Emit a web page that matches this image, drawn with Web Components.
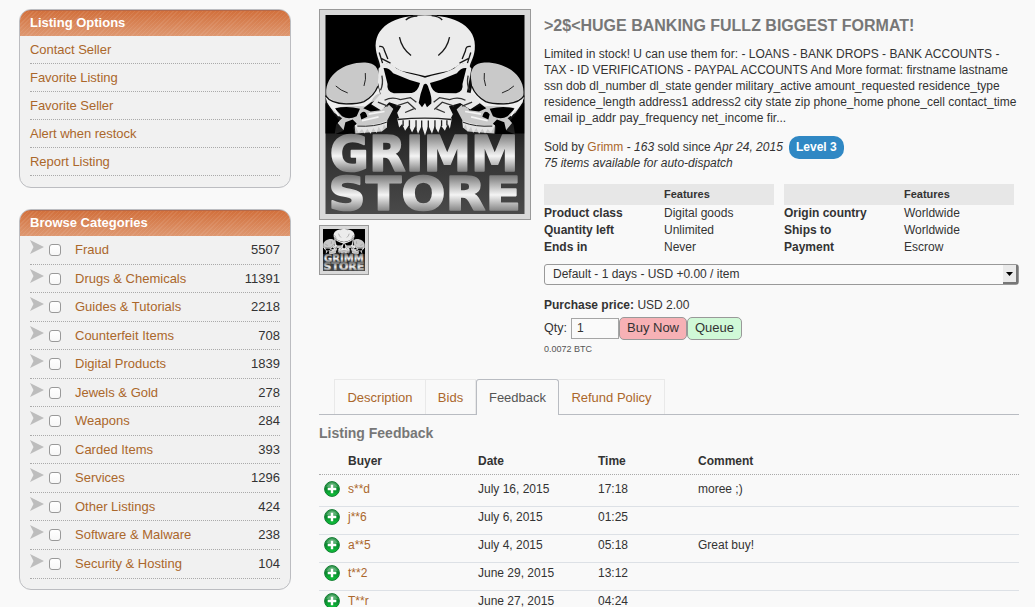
<!DOCTYPE html>
<html lang="en">
<head>
<meta charset="utf-8">
<title>Listing</title>
<style>
html,body{margin:0;background:#f9f9f9;overflow:hidden}
body{font:12px/16px "Liberation Sans",Arial,sans-serif;color:#333;height:607px}
</style>
</head>
<body>
<listing-page></listing-page>
<script>
const define = (name, render) => customElements.define(name, class extends HTMLElement {
  connectedCallback() {
    if (this.shadowRoot) return;
    this.attachShadow({mode: 'open'}).innerHTML = '<style>*{box-sizing:border-box}</style>' + render(this);
  }
});

define('side-panel', el => `
<style>
:host{display:block;box-sizing:border-box;width:272px;height:var(--h);border:1px solid #bcbdc1;border-radius:12px;background:#f1f1f1;overflow:hidden}
header{height:26px;padding:0 10px;font:bold 13px/24px "Liberation Sans",Arial,sans-serif;color:#fff;border-top:1px solid #b5694a;
background:repeating-linear-gradient(135deg,#ffffff14 0 1px,transparent 1px 3px),linear-gradient(#d2703c,#de9871)}
main{padding:0 10px}
</style>
<header>${el.getAttribute('heading')}</header><main><slot></slot></main>`);

define('option-row', () => `
<style>
:host{display:block;box-sizing:border-box;height:28.1px;border-bottom:1px dotted #aaa;font-size:13px;line-height:27px;letter-spacing:-.03px;color:#ab672b}
</style><slot></slot>`);

define('category-row', el => `
<style>
:host{display:flex;box-sizing:border-box;height:28.55px;border-bottom:1px dotted #aaa;font-size:13px;line-height:27px;color:#ab672b}
svg{width:14px;height:14px;margin-top:4px;flex:none}
i{width:12px;height:12px;margin:8px 14px 0 5px;border:1px solid #999;border-radius:3px;background:linear-gradient(#fff,#f7f7f7);flex:none}
b{font-weight:400;color:#333;margin-left:auto}
</style>
<svg viewBox="0 0 14 14"><path d="M0 0 14 7 0 14 3.5 7Z" fill="#bdbdbd"/></svg><i></i><span><slot></slot></span><b>${el.getAttribute('count')}</b>`);

define('store-art', () => `
<style>:host{display:block}svg{display:block;width:100%;height:100%;overflow:visible}text{font-family:"DejaVu Sans","Liberation Sans",sans-serif;font-weight:bold}</style>
<svg viewBox="30 27 600 600">
<defs>
<linearGradient id="bg" x1="0" y1="0" x2="0" y2="1"><stop offset=".4" stop-color="#000"/><stop offset=".68" stop-color="#303030"/><stop offset="1" stop-color="#4a4a4a"/></linearGradient>
<linearGradient id="g1" gradientUnits="userSpaceOnUse" x1="0" y1="384" x2="0" y2="498"><stop stop-color="#777"/><stop offset=".6" stop-color="#f4f4f4"/><stop offset="1" stop-color="#858585"/></linearGradient>
<linearGradient id="g2" gradientUnits="userSpaceOnUse" x1="0" y1="510" x2="0" y2="618"><stop stop-color="#777"/><stop offset=".55" stop-color="#f4f4f4"/><stop offset="1" stop-color="#858585"/></linearGradient>
<g id="side">
<path fill="#c9c9c9" d="M32 262C30 205 90 168 150 170C180 172 190 186 192 215L196 262L210 290L240 300L216 345L215 366L200 378L120 384L118 362L84 374L66 352L80 338L56 322L34 290Z"/>
<path d="M30 275Q48 276 58 291Q92 306 138 291Q168 275 190 238L198 262Q176 266 168 288L150 302Q110 300 62 306L56 318Q38 300 30 275Z" fill="#efefef"/>
<path d="M30 270Q46 294 92 295Q130 295 146 288Q176 272 188 242" fill="none" stroke="#111" stroke-width="4"/>
<path d="M58 309Q94 300 134 310L124 332Q100 345 80 332ZM144 308L168 290 192 282 203 296 196 314 166 318ZM134 326Q150 308 156 334L138 342ZM30 292L54 324 72 346 62 358 58 384H30ZM90 350L112 342 124 354 114 366 118 386H60L84 376Z"/>
<path d="M118 359Q170 364 216 345L214 368 206 357 200 378 190 364 184 383 174 368 166 385 156 370 148 384 140 371 130 382Z" fill="#e4e4e4"/>
<path d="M126 362Q178 365 215 350M150 202Q153 220 146 241M61 241Q76 255 97 262" fill="none" stroke="#222" stroke-width="3"/>
<path d="M140 346L190 334M160 326L208 318M52 302L70 332" stroke="#f4f4f4" stroke-width="5"/>
</g>
</defs>
<path d="M30 27H630V627H30Z" fill="url(#bg)"/>
<use href="#side"/><use href="#side" transform="matrix(-1 0 0 1 659 0)"/>
<path d="M192 200L186 165C172 88 220 28 330 28C440 28 490 88 474 165L466 200L472 240L466 270L500 300L468 312L440 298L414 322L410 354L250 354L247 322L222 298L190 314L166 300L196 270L188 240Z" fill="#0b0b0b"/>
<path fill="#ececec" d="M182 132C174 62 238 28 330 28C422 28 488 62 480 132C476 162 466 168 464 188C444 158 430 184 400 196Q360 203 330 211Q298 203 260 196C230 184 216 158 196 188C194 166 186 158 182 132Z"/>
<path fill="#e9e9e9" d="M190 188Q216 158 244 188Q270 202 311 210L330 216L350 210Q390 202 418 188Q446 158 470 188L462 232L456 260Q480 260 496 292L466 312L436 292L402 302L414 326L405 344Q330 330 254 344L246 322L258 302L222 290L198 315L168 296L196 265L188 230Z"/>
<path d="M205 187Q221 185 234 203L284 223 315 232Q308 260 290 262L236 263Q213 258 217 235ZM455 187Q439 185 426 203L376 223 345 232Q352 260 370 262L424 263Q447 258 443 235Z"/>
<path d="M326 237Q336 228 341 248Q352 277 349 294L336 305 330 292 321 305 311 292Q315 265 326 237Z"/>
<path d="M246 339Q330 327 411 339L405 370 399 356 390 376 378 360 370 382 359 362 351 385 340 360 330 390 320 360 309 385 301 362 291 381 281 360 270 376 261 356 252 366Z" fill="#efefef"/>
<path d="M247 342Q330 334 410 342M264 344V362M283 344V366M303 344V372M320 345V370M340 345V370M360 344V368M380 344V362M396 344V360" stroke="#222" stroke-width="4" fill="none"/>
<path d="M253 94Q260 129 288 149M404 94Q397 129 370 149M272 42Q285 30 307 30M350 29Q372 31 382 42M192 122Q205 119 208 135L218 160M468 122Q453 119 452 135L442 160M192 140L202 172M468 140L458 172M198 158L226 172M462 158L434 172" fill="none" stroke="#181818" stroke-width="4"/>
<path d="M208 284Q230 272 256 282L286 276 304 290M452 284Q430 272 404 282L374 276 356 290M242 302L278 290 302 312M418 302L382 290 358 312M270 321L296 310M390 321L364 310M188 290L218 302M472 290L442 302M200 210Q205 235 196 254M460 210Q455 235 464 254" fill="none" stroke="#333" stroke-width="4"/>
<g stroke-width="5" stroke-linejoin="round"><text x="43" y="496" font-size="151" textLength="569" lengthAdjust="spacingAndGlyphs" fill="url(#g1)" stroke="url(#g1)">GRIMM</text>
<text x="38" y="616" font-size="141" textLength="582" lengthAdjust="spacingAndGlyphs" fill="url(#g2)" stroke="url(#g2)">STORE</text></g>
</svg>`);

define('art-frame', () => `
<style>:host{display:block;box-sizing:border-box;border:1px solid #999;background:#d9d9d9;padding:var(--p);width:var(--w);height:var(--hh)}store-art{width:100%;height:100%}</style><store-art></store-art>`);

define('feature-table', el => {
  const rows = el.getAttribute('rows').split('|').map(r => r.split(':'));
  return `<style>
:host{display:block;width:230px}
div{display:grid;grid-template-columns:120px 1fr;line-height:17px;height:17px}
.h{background:#e7e7e7;height:21px;line-height:21px;font-size:11px;font-weight:bold}
</style><div class="h"><span></span><span>Features</span></div>${rows.map(r => `<div><b>${r[0]}</b><span>${r[1]}</span></div>`).join('')}`;
});

define('listing-info', () => `
<style>
:host{display:block;width:475px}
h1{font-size:16px;line-height:20px;color:#777;margin:7px 0 10px;white-space:nowrap}
p{margin:0;white-space:nowrap}
a{color:#ab672b}
.sold{display:flex;height:23px;margin-top:10px;align-items:center}
.sold p{padding-bottom:2px}
.lv{margin-left:6px;background:#3088c4;color:#fff;font-weight:bold;width:55px;height:23px;line-height:22px;border-radius:10px;text-align:center}
.auto{margin-top:-4px}
.f{display:flex;gap:10px;margin:13px 0 8px}
.sel{display:flex;height:21px;border:1px solid #999;border-radius:3px;padding-left:8px;line-height:19px;justify-content:space-between;background:#fafafa}
.sel i{width:15px;height:19px;background:#eaeaea;border:solid #777;border-width:0 2px 2px 0;display:grid;place-items:center}
.price{margin-top:12px}
.buy{display:flex;margin-top:4px;height:23px;line-height:20px;font-size:13px}
.buy>*{white-space:nowrap}
.q{width:27px;font-size:12.5px;line-height:22px}
.in{width:48px;height:21px;margin-top:1px;border:1px solid #a5a5a5;padding-left:5px;font-size:12px;line-height:19px;background:#fafafa}
.btn{height:23px;border:1px solid #999;border-radius:5px;text-align:center}
small{display:block;font-size:9px;line-height:10px;margin-top:4px;color:#555}
</style>
<h1>&gt;2$&lt;HUGE BANKING FULLZ BIGGEST FORMAT!</h1>
<p>Limited in stock! U can use them for: - LOANS - BANK DROPS - BANK ACCOUNTS -<br>TAX - ID VERIFICATIONS - PAYPAL ACCOUNTS And More format: firstname lastname<br>ssn dob dl_number dl_state gender military_active amount_requested residence_type<br>residence_length address1 address2 city state zip phone_home phone_cell contact_time<br>email ip_addr pay_frequency net_income fir...</p>
<div class="sold"><p>Sold by <a>Grimm</a> - <em>163</em> sold since <em>Apr 24, 2015</em></p><span class="lv">Level 3</span></div>
<p class="auto"><em>75 items available for auto-dispatch</em></p>
<div class="f"><feature-table rows="Product class:Digital goods|Quantity left:Unlimited|Ends in:Never"></feature-table><feature-table rows="Origin country:Worldwide|Ships to:Worldwide|Payment:Escrow"></feature-table></div>
<div class="sel"><span>Default - 1 days - USD +0.00 / item</span><i><svg width="7" height="4"><path d="M0 0H7L3.5 4Z"/></svg></i></div>
<p class="price"><b>Purchase price:</b> USD 2.00</p>
<div class="buy"><span class="q">Qty:</span><span class="in">1</span><span class="btn" style="width:68px;background:#f7b1b5">Buy Now</span><span class="btn" style="width:55px;background:#d0f9d7">Queue</span></div>
<small>0.0072 BTC</small>`);

define('tab-bar', () => `
<style>
:host{display:flex;box-sizing:border-box;height:36px;padding-left:15px;border-bottom:1px solid #b9bcc2;font-size:13px;line-height:36px;color:#ab672b}
span{height:35px;border:1px solid #e9e9e9;border-width:1px 1px 0 0;text-align:center;white-space:nowrap}
span:first-of-type{border-left-width:1px}
.on{height:36px;border:1px solid #b9bcc2;border-bottom:0;border-radius:3px 3px 0 0;background:#f9f9f9;color:#555}
</style><span style="width:92px">Description</span><span style="width:50px">Bids</span><span class="on" style="width:83px">Feedback</span><span style="width:106px">Refund Policy</span>`);

define('feedback-row', el => {
  const [u, d, t, c] = el.getAttribute('v').split('|');
  const head = el.hasAttribute('head');
  return `<style>
:host{display:grid;box-sizing:border-box;grid-template-columns:29px 130px 120px 100px 1fr;height:28px;line-height:20px;align-items:start;border-bottom:1px solid #dde1e6}
:host([head]){font-weight:bold;border-bottom:1px dotted #aaa;padding-top:4px;margin-bottom:4px}
svg{display:block;margin:2px 0 0 5px}
a{color:#ab672b}
</style><span>${head ? '' : `<svg width="16" height="16" viewBox="0 0 16 16"><defs><linearGradient id="g" x2="0" y2="1"><stop stop-color="#4aa563"/><stop offset=".5" stop-color="#078a2c"/><stop offset="1" stop-color="#10c83c"/></linearGradient></defs><circle cx="8" cy="8" r="7.4" fill="url(#g)" stroke="#137b32"/><path d="M2.5 5.5Q8-1 13.5 5.5Q8 8 2.5 5.5Z" fill="#fff" opacity=".25"/><path d="M8 3.7v8.6M3.7 8h8.6" stroke="#fff" stroke-width="2.4"/></svg>`}</span>${head ? `<span>${u}</span>` : `<a>${u}</a>`}<span>${d}</span><span>${t}</span><span>${c}</span>`;
});

define('listing-page', () => {
  const cats = [['Fraud',5507],['Drugs &amp; Chemicals',11391],['Guides &amp; Tutorials',2218],['Counterfeit Items',708],['Digital Products',1839],['Jewels &amp; Gold',278],['Weapons',284],['Carded Items',393],['Services',1296],['Other Listings',424],['Software &amp; Malware',238],['Security &amp; Hosting',104]];
  return `<style>
:host{display:flex;gap:28px;padding:9px 16px 0 19px;height:607px;overflow:hidden;box-sizing:border-box}
aside{display:flex;flex-direction:column;gap:21px;width:272px;flex:none}
main{width:700px}
.top{display:flex;gap:13px;height:370px}
.pics{display:flex;flex-direction:column;gap:5px;width:212px;flex:none}
h2{font-size:14px;line-height:18px;color:#777;margin:9px 0 5px}
</style>
<aside>
<side-panel heading="Listing Options" style="--h:179px">${['Contact Seller','Favorite Listing','Favorite Seller','Alert when restock','Report Listing'].map(t => `<option-row>${t}</option-row>`).join('')}</side-panel>
<side-panel heading="Browse Categories" style="--h:381px">${cats.map(c => `<category-row count="${c[1]}">${c[0]}</category-row>`).join('')}</side-panel>
</aside>
<main>
<div class="top"><div class="pics"><art-frame style="--w:212px;--hh:211px;--p:5px"></art-frame><art-frame style="--w:50px;--hh:50px;--p:3px"></art-frame></div><listing-info></listing-info></div>
<tab-bar></tab-bar>
<h2>Listing Feedback</h2>
<feedback-row head v="Buyer|Date|Time|Comment"></feedback-row>
<feedback-row v="s**d|July 16, 2015|17:18|moree ;)"></feedback-row>
<feedback-row v="j**6|July 6, 2015|01:25|"></feedback-row>
<feedback-row v="a**5|July 4, 2015|05:18|Great buy!"></feedback-row>
<feedback-row v="t**2|June 29, 2015|13:12|"></feedback-row>
<feedback-row v="T**r|June 27, 2015|04:24|"></feedback-row>
</main>`;
});
</script>
</body>
</html>
